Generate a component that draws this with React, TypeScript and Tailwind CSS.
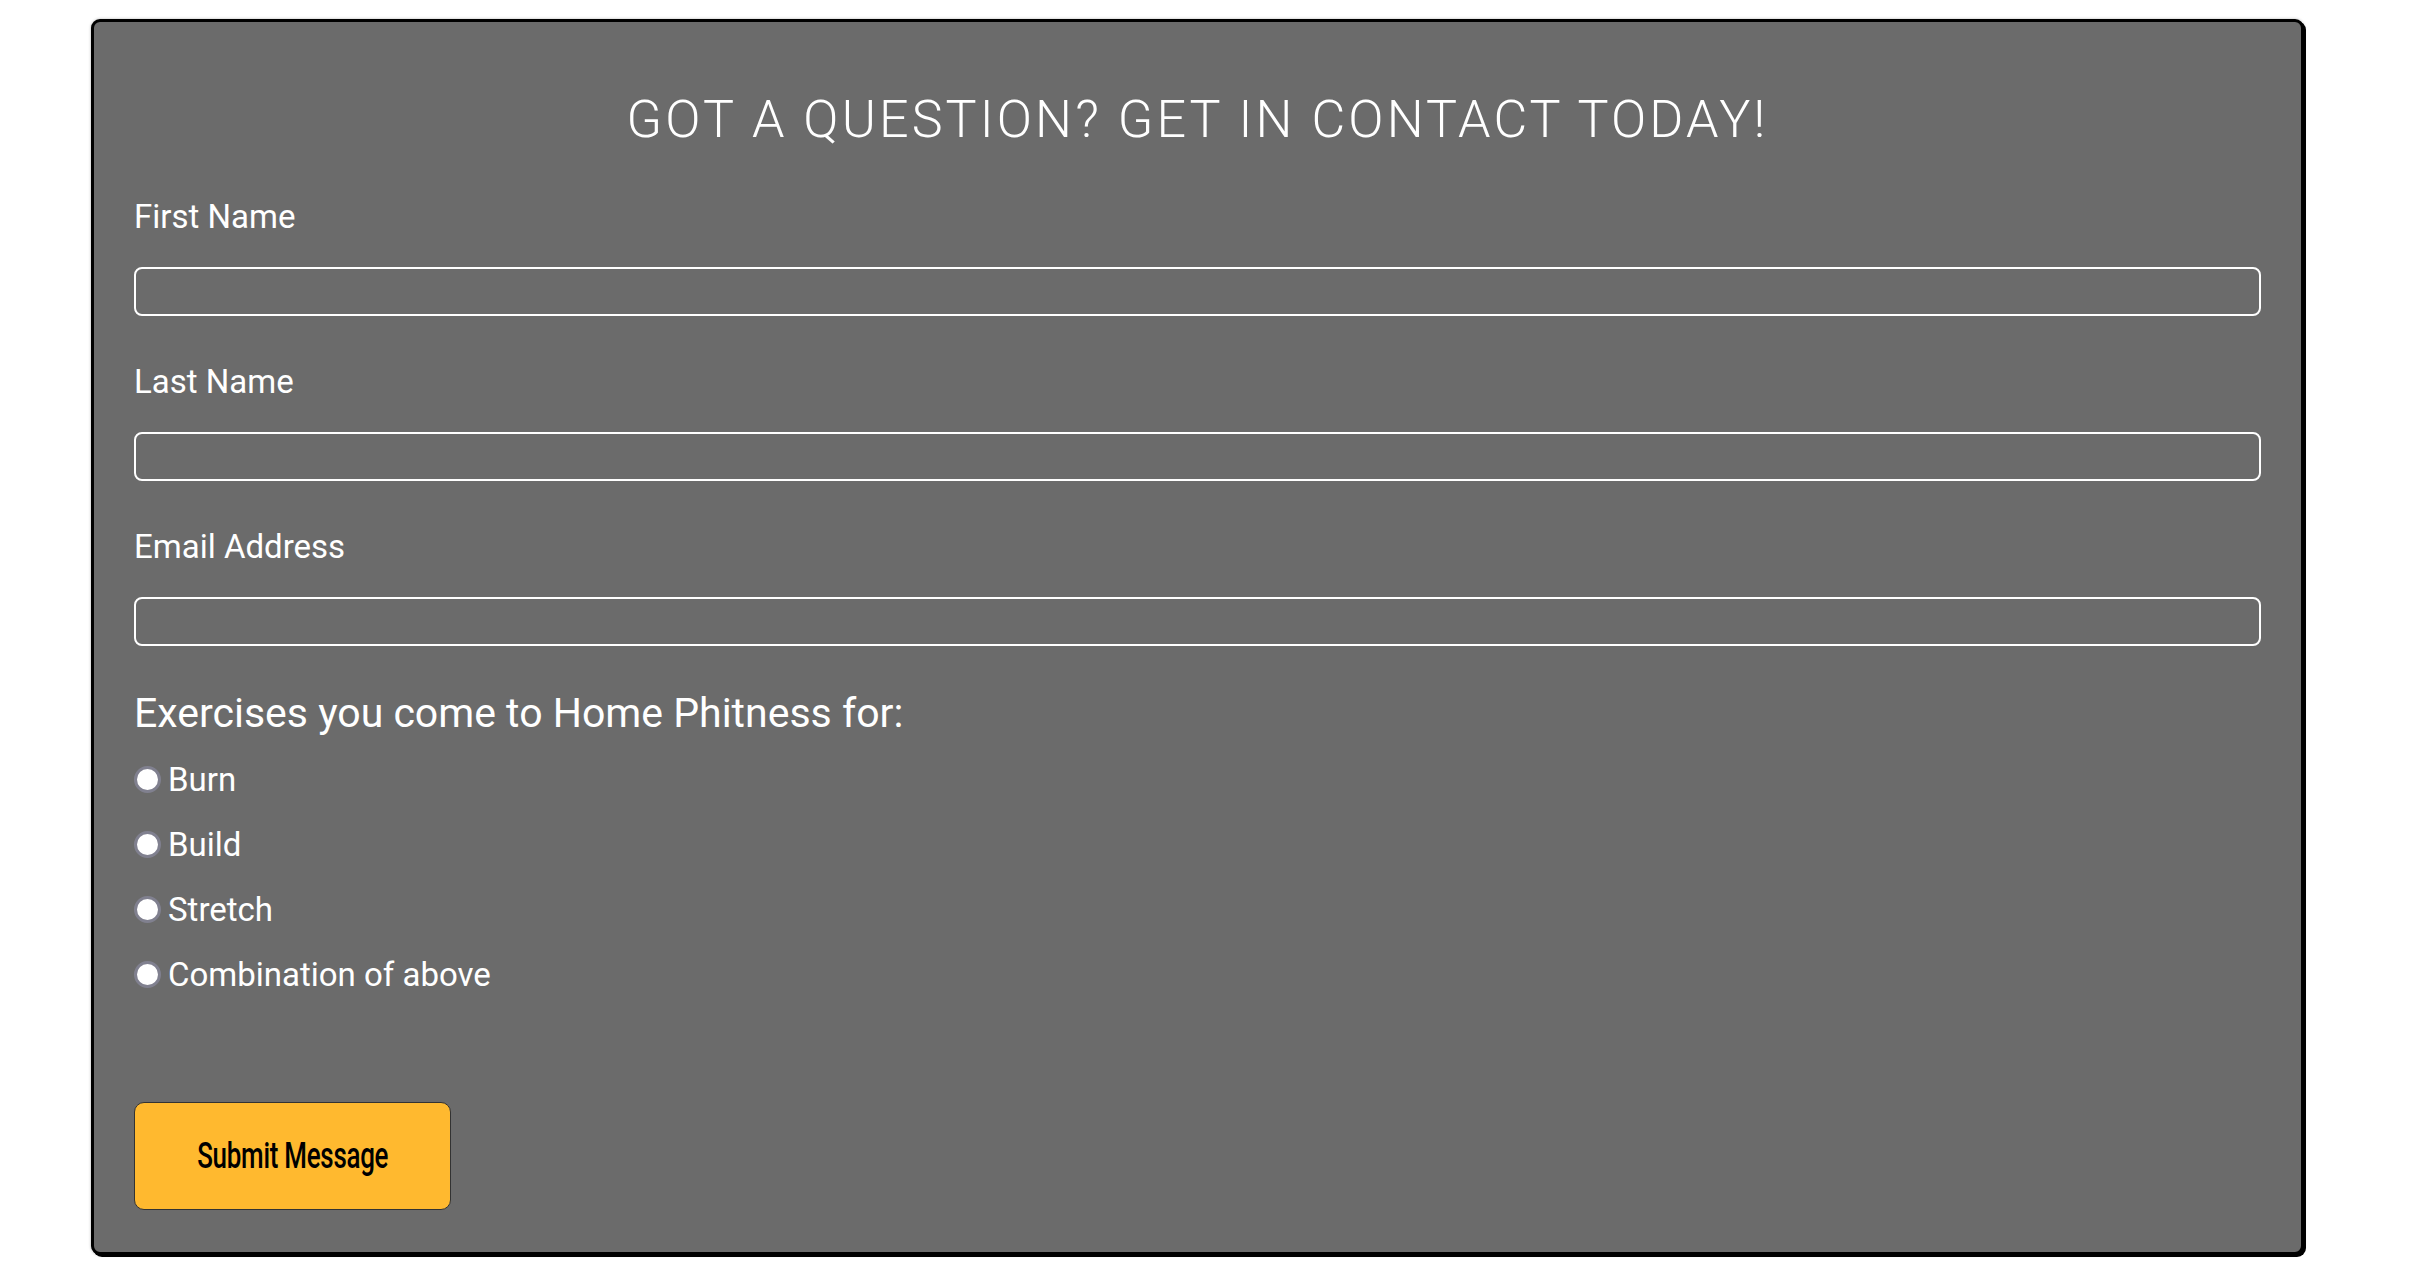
const fields = ["First Name", "Last Name", "Email Address"];
const options = ["Burn", "Build", "Stretch", "Combination of above"];

const body = { fontFamily: "Roboto, 'Open Sans', sans-serif" };

const App = () => {
  return (
    <div className="min-h-screen bg-white pt-[19px]" style={body}>
      <div className="ml-[91px] w-[2213px] rounded-[9px] border-[3px] border-black bg-[#6b6b6b] px-[40px] pt-[68px] pb-[42px] text-white shadow-[2px_2px_0_#000,0_0_3px_rgba(0,0,0,0.3)]">
        <h1 className="h-[60px] text-center text-[52px] leading-[60px] font-light tracking-[0.06em] uppercase">
          Got a question? Get in contact today!
        </h1>

        <form className="mt-[47px]">
          {fields.map((f, i) => (
            <div key={f} className={i > 0 ? "mt-[46px]" : ""}>
              <label className="block h-[40px] text-[33px] leading-[40px]">{f}</label>
              <input
                type="text"
                className="mt-[30px] block h-[49px] w-full rounded-[8px] border-2 border-white bg-transparent px-3 text-[26px] text-white outline-none"
              />
            </div>
          ))}

          <p className="mt-[43px] h-[48px] text-[41px] leading-[48px]">
            Exercises you come to Home Phitness for:
          </p>
          <div className="mt-[10px]">
            {options.map((o) => (
              <label key={o} className="flex h-[65px] items-center gap-[7px] text-[33px]">
                <span className="h-[27px] w-[27px] shrink-0 rounded-full border-[3px] border-[#80808f] bg-white" />
                {o}
              </label>
            ))}
          </div>

          <button
            type="button"
            className="mt-[95px] flex h-[108px] w-[317px] items-center justify-center rounded-[10px] border border-[#333] bg-[#ffb92f] text-black"
          >
            <span className="inline-block scale-x-[0.72] text-[36px] font-medium tracking-[-0.01em]">Submit Message</span>
          </button>
        </form>
      </div>
    </div>
  );
};

export default App;
